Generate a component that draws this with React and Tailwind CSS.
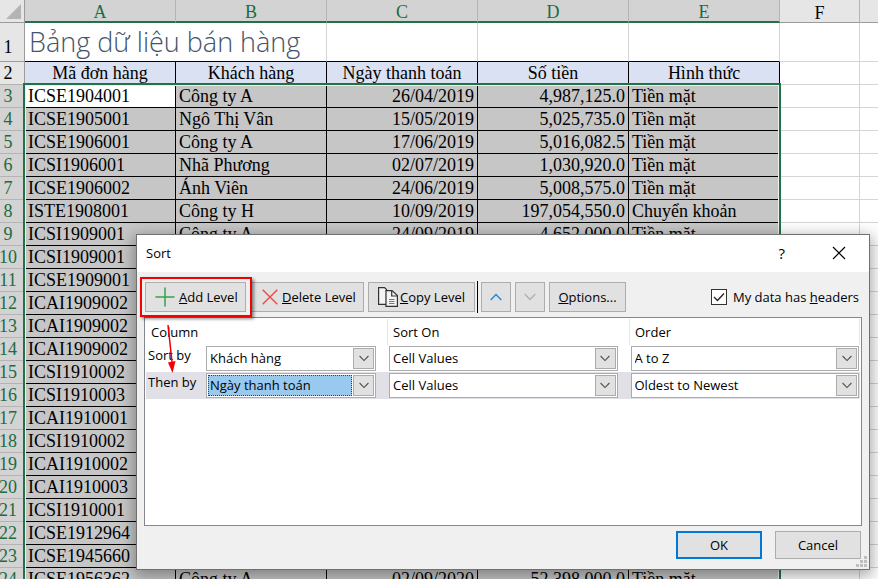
import React, { useState } from "react";
import clsx from "clsx";

const COLUMNS = ["A", "B", "C", "D", "E"];

const HEADINGS = [
  "Mã đơn hàng",
  "Khách hàng",
  "Ngày thanh toán",
  "Số tiền",
  "Hình thức",
];

const ORDERS = [
  ["ICSE1904001", "Công ty A", "26/04/2019", "4,987,125.0", "Tiền mặt"],
  ["ICSE1905001", "Ngô Thị Vân", "15/05/2019", "5,025,735.0", "Tiền mặt"],
  ["ICSE1906001", "Công ty A", "17/06/2019", "5,016,082.5", "Tiền mặt"],
  ["ICSI1906001", "Nhã Phương", "02/07/2019", "1,030,920.0", "Tiền mặt"],
  ["ICSE1906002", "Ánh Viên", "24/06/2019", "5,008,575.0", "Tiền mặt"],
  ["ISTE1908001", "Công ty H", "10/09/2019", "197,054,550.0", "Chuyển khoản"],
  ["ICSI1909001", "Công ty A", "24/09/2019", "4,652,000.0", "Tiền mặt"],
  ["ICSI1909001"],
  ["ICSE1909001"],
  ["ICAI1909002"],
  ["ICAI1909002"],
  ["ICAI1909002"],
  ["ICSI1910002"],
  ["ICSI1910003"],
  ["ICAI1910001"],
  ["ICSI1910002"],
  ["ICAI1910002"],
  ["ICAI1910003"],
  ["ICSI1910001"],
  ["ICSE1912964"],
  ["ICSE1945660"],
  ["ICSE1956362", "Công ty A", "02/09/2020", "52,398,000.0", "Tiền mặt"],
];

const LEVELS = [
  {
    label: "Sort by",
    column: "Khách hàng",
    orders: ["A to Z", "Z to A"],
  },
  {
    label: "Then by",
    column: "Ngày thanh toán",
    orders: ["Oldest to Newest", "Newest to Oldest"],
  },
];

const RowNumber = ({ n, selected }) => (
  <th
    scope="row"
    className={clsx(
      "border-b border-r border-r-[#9b9b9b] border-b-[#b4b4b4] p-0 pt-px font-normal",
      selected ? "bg-[#d3d3d3] text-[#1e6b41]" : "bg-[#e6e6e6] text-black"
    )}
  >
    <div className="-ml-2 text-center">{n}</div>
  </th>
);

const EmptyCells = () => (
  <>
    <td className="border-b border-r border-[#d4d4d4] p-0" />
    <td className="border-b border-[#d4d4d4] p-0" />
  </>
);

const Sheet = () => (
  <div className="relative">
    <table className="w-full table-fixed border-separate border-spacing-0 font-['Liberation_Serif','Times_New_Roman',serif] text-[18px] leading-[21px] text-black">
      <colgroup>
        <col className="w-[25px]" />
        {COLUMNS.map((c) => (
          <col key={c} className="w-[151px]" />
        ))}
        <col className="w-[80px]" />
        <col />
      </colgroup>
      <thead>
        <tr className="h-[23px]">
          <th className="border-b border-r border-[#9b9b9b] bg-[#e6e6e6] p-0">
            <svg viewBox="0 0 24 22" className="block h-[22px] w-6">
              <path d="M21 4V19H6Z" fill="#b4b4b4" />
            </svg>
          </th>
          {COLUMNS.map((c) => (
            <th
              key={c}
              scope="col"
              className="border-b-2 border-r border-b-[#217346] border-r-[#b4b4b4] bg-[#d3d3d3] p-0 pt-[3px] font-normal leading-[18px] text-[#1e6b41]"
            >
              {c}
            </th>
          ))}
          <th
            scope="col"
            className="border-b border-r border-b-[#9b9b9b] border-r-[#b4b4b4] bg-[#e6e6e6] p-0 pt-[3px] font-normal leading-[18px]"
          >
            F
          </th>
          <th className="border-b border-[#9b9b9b] bg-[#e6e6e6] p-0" />
        </tr>
      </thead>
      <tbody>
        <tr className="h-[39px]">
          <th
            scope="row"
            className="border-b border-r border-[#9b9b9b] bg-[#e6e6e6] p-0 align-bottom font-normal"
          >
            <div className="-ml-2 pb-[3px] text-center">1</div>
          </th>
          <td
            colSpan={2}
            className="whitespace-nowrap border-b border-r border-b-black border-r-[#d4d4d4] p-0 pl-1 font-['Open_Sans','Noto_Sans',sans-serif] text-[27px] font-light leading-[38px] text-[#44546a]"
          >
            Bảng dữ liệu bán hàng
          </td>
          {COLUMNS.slice(2).map((c) => (
            <td
              key={c}
              className="border-b border-r border-b-black border-r-[#d4d4d4] p-0"
            />
          ))}
          <EmptyCells />
        </tr>
        <tr className="h-[23px]">
          <RowNumber n={2} />
          {HEADINGS.map((h) => (
            <th
              key={h}
              scope="col"
              className="whitespace-nowrap border-b border-r border-black bg-[#d9e1f2] p-0 pt-px font-normal"
            >
              {h}
            </th>
          ))}
          <EmptyCells />
        </tr>
        {ORDERS.map((order, i) => (
          <tr key={i} className="h-[23px]">
            <RowNumber n={i + 3} selected />
            {COLUMNS.map((c, j) => (
              <td
                key={c}
                className={clsx(
                  "whitespace-nowrap border-b border-r border-black p-0 pl-[3px] pr-[3px] pt-px",
                  (j === 2 || j === 3) && "text-right",
                  i === 0 && j === 0 ? "bg-white" : "bg-[#c6c6c6]"
                )}
              >
                {order[j]}
              </td>
            ))}
            <EmptyCells />
          </tr>
        ))}
      </tbody>
    </table>

    {/* Selected range outline */}
    <div className="pointer-events-none absolute bottom-0 left-[23px] top-[83px] w-[758px] border-2 border-[#217346]">
      <div className="h-full border border-[#f0f0f0]" />
    </div>
  </div>
);

const ToolButton = ({ className, children, ...props }) => (
  <button
    type="button"
    className={clsx(
      "flex h-[30px] shrink-0 items-center whitespace-nowrap border border-[#adadad] bg-[#e1e1e1] pb-px",
      className
    )}
    {...props}
  >
    {children}
  </button>
);

const Chevron = ({ up, className }) => (
  <svg viewBox="0 0 12 8" fill="none" className={className}>
    <path
      d={up ? "M0.7 7L6 1.5L11.3 7" : "M0.7 1L6 6.5L11.3 1"}
      stroke="currentColor"
      strokeWidth="1.3"
    />
  </svg>
);

const Dropdown = ({ label, options, active }) => (
  <div className="relative h-[25px] border border-[#acacac] bg-white p-px">
    <select
      aria-label={label}
      className={clsx(
        "block h-[21px] appearance-none pb-[2px] pr-1 outline-none",
        active
          ? "w-[calc(100%-22px)] border border-dotted border-[#663610] bg-[#99c9ef] pl-px"
          : "w-full bg-white pl-[2px]"
      )}
    >
      {options.map((o) => (
        <option key={o}>{o}</option>
      ))}
    </select>
    <span className="pointer-events-none absolute right-px top-px flex size-[21px] items-center justify-center border border-[#acacac] bg-[#e1e1e1] text-[#505050]">
      <Chevron className="h-[7px] w-[10px]" />
    </span>
  </div>
);

const SortDialog = () => {
  const [hasHeaders, setHasHeaders] = useState(true);

  return (
    <div
      role="dialog"
      aria-label="Sort"
      className="absolute left-[136px] right-2 top-[234px] border border-[#707070] bg-[#f0f0f0] font-['Open_Sans','Noto_Sans',sans-serif] text-[13px] leading-[18px] text-black shadow-[0_4px_14px_2px_rgba(0,0,0,0.35)]"
    >
      <div className="flex h-[37px] items-center bg-white pb-[2px] pl-[9px] pr-[23px]">
        <h2 className="flex-1">Sort</h2>
        <button type="button" aria-label="Help" className="mr-[47px] text-[15px]">
          ?
        </button>
        <button type="button" aria-label="Close">
          <svg viewBox="0 0 14 14" className="size-[14px]">
            <path d="M1 1L13 13M13 1L1 13" stroke="#000" strokeWidth="1.2" />
          </svg>
        </button>
      </div>

      <div className="flex items-center gap-1 pl-2 pr-[10px] pt-[9px]">
        <div className="relative">
          <ToolButton className="w-[101px] gap-1 pl-[9px]">
            <svg viewBox="0 0 20 20" className="size-5">
              <path d="M10 0.5V19.5M0.5 10H19.5" stroke="#35a34f" strokeWidth="1.5" />
            </svg>
            <span>
              <u>A</u>dd Level
            </span>
          </ToolButton>
          {/* Callout around the button, with an arrow to the new level */}
          <div className="pointer-events-none absolute -inset-[5px] -right-[6px] z-10 border-2 border-[#f40000] shadow-[2px_2px_3px_rgba(0,0,0,0.45)]" />
          <svg
            viewBox="0 0 16 50"
            className="pointer-events-none absolute left-[18px] top-[42px] z-10 h-[50px] w-4 overflow-visible"
          >
            <path d="M5 1L9 38" stroke="#f40000" strokeWidth="1.5" />
            <path d="M5 38.5L12.5 37L9.5 49Z" fill="#f40000" />
          </svg>
        </div>
        <ToolButton className="w-[114px] gap-1 pl-[11px]">
          <svg viewBox="0 0 16 16" className="size-4">
            <path d="M0.7 0.7L15.3 15.3M15.3 0.7L0.7 15.3" stroke="#ee4a43" strokeWidth="1.4" />
          </svg>
          <span>
            <u>D</u>elete Level
          </span>
        </ToolButton>
        <ToolButton className="w-[107px] gap-[2px] pl-[9px]">
          <svg viewBox="0 0 20 20" fill="none" className="size-5">
            <path d="M0.6 0.6H6.5L8.5 2.6V17.4H0.6Z" fill="#f5f5f5" stroke="#333" strokeWidth="1.2" />
            <path d="M8 3.6H14L19.4 8.5V19.4H8Z" fill="#f5f5f5" stroke="#333" strokeWidth="1.2" />
            <path d="M13.7 3.6V9H19.4" stroke="#333" strokeWidth="1.2" />
            <path d="M11 12.5H16.5M11 14.5H16.5M11 16.5H16.5" stroke="#777" />
          </svg>
          <span>
            <u>C</u>opy Level
          </span>
        </ToolButton>
        <div className="-ml-[2px] -mr-px h-8 w-px bg-black" />
        <ToolButton aria-label="Move Up" className="w-[30px] justify-center text-[#1e88d2]">
          <Chevron up className="h-2 w-3" />
        </ToolButton>
        <ToolButton aria-label="Move Down" className="w-[30px] justify-center text-[#b0b0b0]">
          <Chevron className="h-2 w-3" />
        </ToolButton>
        <ToolButton className="w-[77px] justify-center">
          <span>
            <u>O</u>ptions...
          </span>
        </ToolButton>
        <label className="ml-auto flex items-center gap-[6px] whitespace-nowrap">
          <span className="relative">
            <input
              type="checkbox"
              checked={hasHeaders}
              onChange={(e) => setHasHeaders(e.target.checked)}
              className="block size-4 appearance-none border border-[#333] bg-white"
            />
            {hasHeaders && (
              <svg
                viewBox="0 0 16 16"
                fill="none"
                className="pointer-events-none absolute inset-0 size-4"
              >
                <path d="M3 8L6.5 11.5L13 4.5" stroke="#222" strokeWidth="1.3" />
              </svg>
            )}
          </span>
          <span>
            My data has <u>h</u>eaders
          </span>
        </label>
      </div>

      <div className="mx-[7px] mt-1 min-h-[209px] border border-[#828790] bg-white p-px">
        <div className="mb-px grid h-[26px] grid-cols-[242px_242fr_230fr] leading-[26px]">
          {["Column", "Sort On", "Order"].map((h) => (
            <div key={h} className="border-r border-[#e5e5e5] pl-[5px]">
              {h}
            </div>
          ))}
        </div>
        {LEVELS.map((level, i) => (
          <div
            key={level.label}
            className={clsx(
              "grid grid-cols-[47px_170px_1fr_1fr] gap-x-[13px] pb-px pr-px",
              i === 1 && "bg-[#e0e0e6] pt-px"
            )}
          >
            <span className="whitespace-nowrap pl-[2px]">{level.label}</span>
            <Dropdown
              label={`${level.label} column`}
              options={[level.column, ...HEADINGS.filter((h) => h !== level.column)]}
              active={i === 1}
            />
            <Dropdown
              label={`${level.label} sort on`}
              options={["Cell Values", "Cell Color", "Font Color"]}
            />
            <Dropdown label={`${level.label} order`} options={level.orders} />
          </div>
        ))}
      </div>

      <div className="flex justify-end gap-[13px] pb-[10px] pr-2 pt-[5px]">
        <button type="button" className="h-7 w-[86px] border-2 border-[#0078d7] bg-[#e1e1e1]">
          OK
        </button>
        <button type="button" className="h-7 w-[86px] border border-[#adadad] bg-[#e1e1e1]">
          Cancel
        </button>
      </div>

      {/* Resize grip */}
      <svg viewBox="0 0 11 11" className="absolute bottom-[2px] right-[2px] size-[11px]" fill="#bfbfbf">
        <path d="M8 0h3v3h-3zM4 4h3v3h-3zM8 4h3v3h-3zM0 8h3v3h-3zM4 8h3v3h-3zM8 8h3v3h-3z" />
      </svg>
    </div>
  );
};

const App = () => (
  <main className="relative h-screen overflow-hidden bg-white">
    <Sheet />
    <SortDialog />
  </main>
);

export default App;
